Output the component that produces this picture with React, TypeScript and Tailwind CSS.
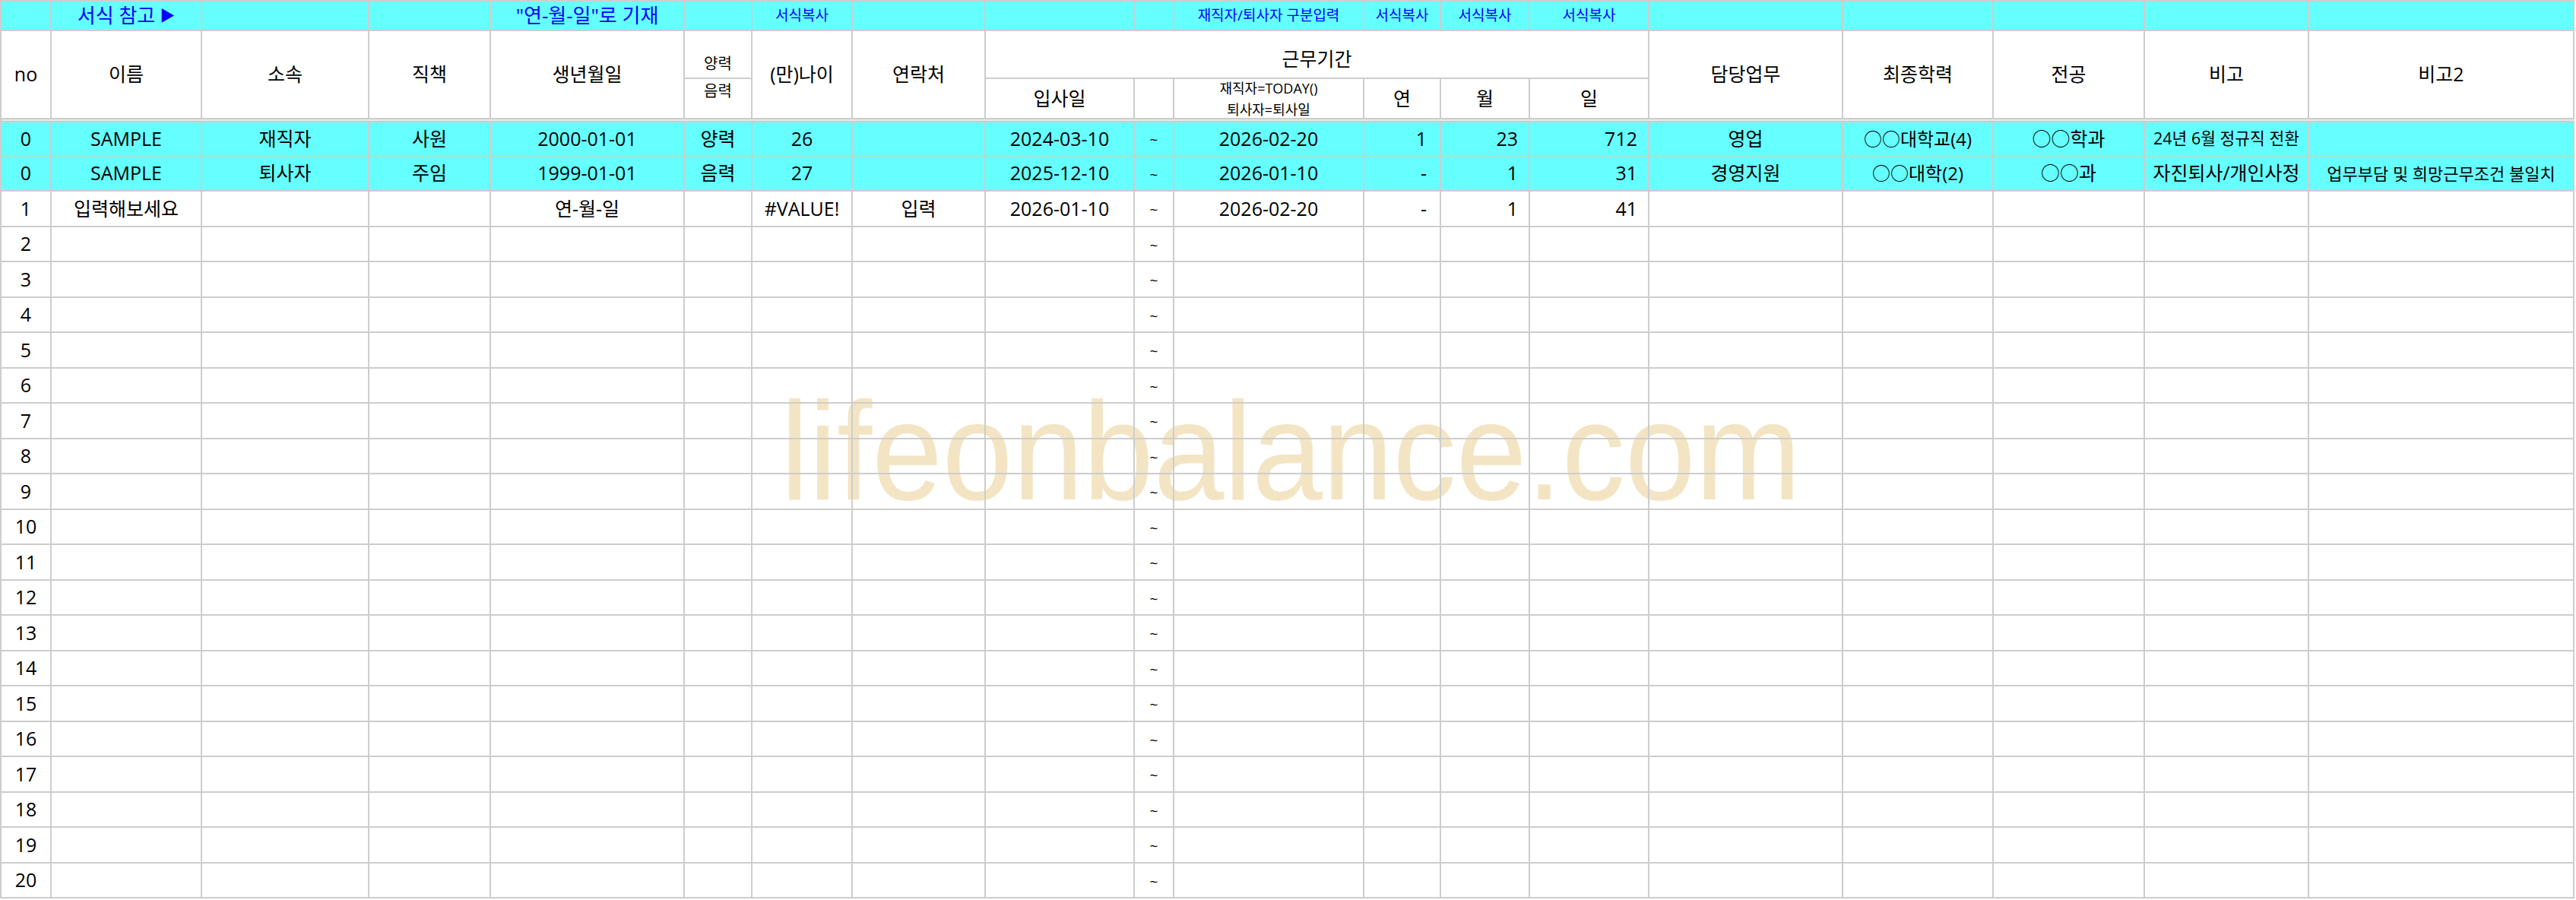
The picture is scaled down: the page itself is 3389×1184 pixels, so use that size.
import type { ReactNode } from "react";

type CellProps = {
  children?: ReactNode;
  className?: string;
};

function Cell({ children, className = "" }: CellProps) {
  return (
    <div
      className={`flex items-center overflow-hidden whitespace-nowrap border-r-2 border-b-2 border-[#cdcdcd] ${className}`}
    >
      {children}
    </div>
  );
}

// column index -> extra classes for data cells
const align = (i: number) => {
  if (i === 11) return "justify-end pr-[17px]";
  if (i === 12 || i === 13) return "justify-end pr-[14px]";
  return "justify-center";
};

const band: Record<number, { text: ReactNode; size: string }> = {
  1: {
    text: (
      <>
        서식 참고 <span className="ml-[6px] text-[20px]">▶</span>
      </>
    ),
    size: "text-[26px]",
  },
  4: { text: "\"연-월-일\"로 기재", size: "text-[26px]" },
  6: { text: "서식복사", size: "text-[19px]" },
  10: { text: "재직자/퇴사자 구분입력", size: "text-[19px]" },
  11: { text: "서식복사", size: "text-[19px]" },
  12: { text: "서식복사", size: "text-[19px]" },
  13: { text: "서식복사", size: "text-[19px]" },
};

const samples = [
  ["0", "SAMPLE", "재직자", "사원", "2000-01-01", "양력", "26", "", "2024-03-10", "~", "2026-02-20", "1", "23", "712", "영업", "○○대학교(4)", "○○학과", "24년 6월 정규직 전환", ""],
  ["0", "SAMPLE", "퇴사자", "주임", "1999-01-01", "음력", "27", "", "2025-12-10", "~", "2026-01-10", "-", "1", "31", "경영지원", "○○대학(2)", "○○과", "자진퇴사/개인사정", "업무부담 및 희망근무조건 불일치"],
];

const firstRow = ["1", "입력해보세요", "", "", "연-월-일", "", "#VALUE!", "입력", "2026-01-10", "~", "2026-02-20", "-", "1", "41", "", "", "", "", ""];

// shrink-to-fit cells
const fit: Record<string, string> = {
  "24년 6월 정규직 전환": "text-[21.5px]",
  "업무부담 및 희망근무조건 불일치": "text-[22px]",
  "○○대학교(4)": "text-[24px]",
  "○○대학(2)": "text-[24px]",
  "~": "text-[19px] pt-[4px]",
};

function DataRow({ values, cyan }: { values: string[]; cyan?: boolean }) {
  return (
    <>
      {values.map((v, i) => (
        <Cell key={i} className={`${align(i)} ${cyan ? "bg-[#66ffff]" : ""} ${fit[v] ?? "text-[25px]"}`}>
          {v}
        </Cell>
      ))}
    </>
  );
}

export default function App() {
  const rows = Array.from({ length: 19 }, (_, k) => k + 2);

  return (
    <div className="relative h-[1184px] w-[3389px] overflow-hidden bg-white font-['Open_Sans','Noto_Sans_CJK_KR',sans-serif] text-black">
      <div className="pointer-events-none absolute left-[1027px] top-[501px] origin-left scale-x-[0.905] whitespace-nowrap font-['Liberation_Sans',sans-serif] text-[184px] leading-none text-[#f3e5c4]">
        lifeonbalance.com
      </div>

      <div className="relative grid w-[3387px] grid-cols-[66px_198px_220px_160px_255px_89px_132px_175px_196px_52px_250px_101px_117px_157px_255px_198px_199px_216px_349px] grid-rows-[39px_63px_53px_4px_45px_46px_repeat(20,46.5px)] border-l-2 border-t-2 border-[#cdcdcd]">
        {/* guide band */}
        {Array.from({ length: 19 }, (_, i) => (
          <Cell key={i} className={`justify-center bg-[#66ffff] text-[#0000ff] ${band[i]?.size ?? ""}`}>
            {band[i]?.text}
          </Cell>
        ))}

        {/* header */}
        <Cell className="row-span-2 justify-center text-[25px]">no</Cell>
        <Cell className="row-span-2 justify-center text-[25px]">이름</Cell>
        <Cell className="row-span-2 justify-center text-[25px]">소속</Cell>
        <Cell className="row-span-2 justify-center text-[25px]">직책</Cell>
        <Cell className="row-span-2 justify-center text-[25px]">생년월일</Cell>
        <Cell className="items-end justify-center pb-[3px] text-[20px]">양력</Cell>
        <Cell className="row-span-2 justify-center text-[25px]">(만)나이</Cell>
        <Cell className="row-span-2 justify-center text-[25px]">연락처</Cell>
        <Cell className="col-span-6 items-end justify-center pb-[6px] text-[25px]">근무기간</Cell>
        <Cell className="row-span-2 justify-center text-[25px]">담당업무</Cell>
        <Cell className="row-span-2 justify-center text-[25px]">최종학력</Cell>
        <Cell className="row-span-2 justify-center text-[25px]">전공</Cell>
        <Cell className="row-span-2 justify-center text-[25px]">비고</Cell>
        <Cell className="row-span-2 justify-center text-[25px]">비고2</Cell>

        <Cell className="items-start justify-center pt-[1px] text-[20px]">음력</Cell>
        <Cell className="justify-center text-[25px]">입사일</Cell>
        <Cell />
        <Cell className="flex-col justify-center text-[18px] leading-[28px]">
          <span>재직자=TODAY()</span>
          <span>퇴사자=퇴사일</span>
        </Cell>
        <Cell className="justify-center text-[25px]">연</Cell>
        <Cell className="justify-center text-[25px]">월</Cell>
        <Cell className="justify-center text-[25px]">일</Cell>

        {/* double rule under the header */}
        <div className="col-span-full border-b-2 border-[#cdcdcd] bg-[#e6e6e6]" />

        {samples.map((s, k) => (
          <DataRow key={k} values={s} cyan />
        ))}
        <DataRow values={firstRow} />
        {rows.map((n) => (
          <DataRow
            key={n}
            values={[String(n), "", "", "", "", "", "", "", "", "~", "", "", "", "", "", "", "", "", ""]}
          />
        ))}
      </div>
    </div>
  );
}
